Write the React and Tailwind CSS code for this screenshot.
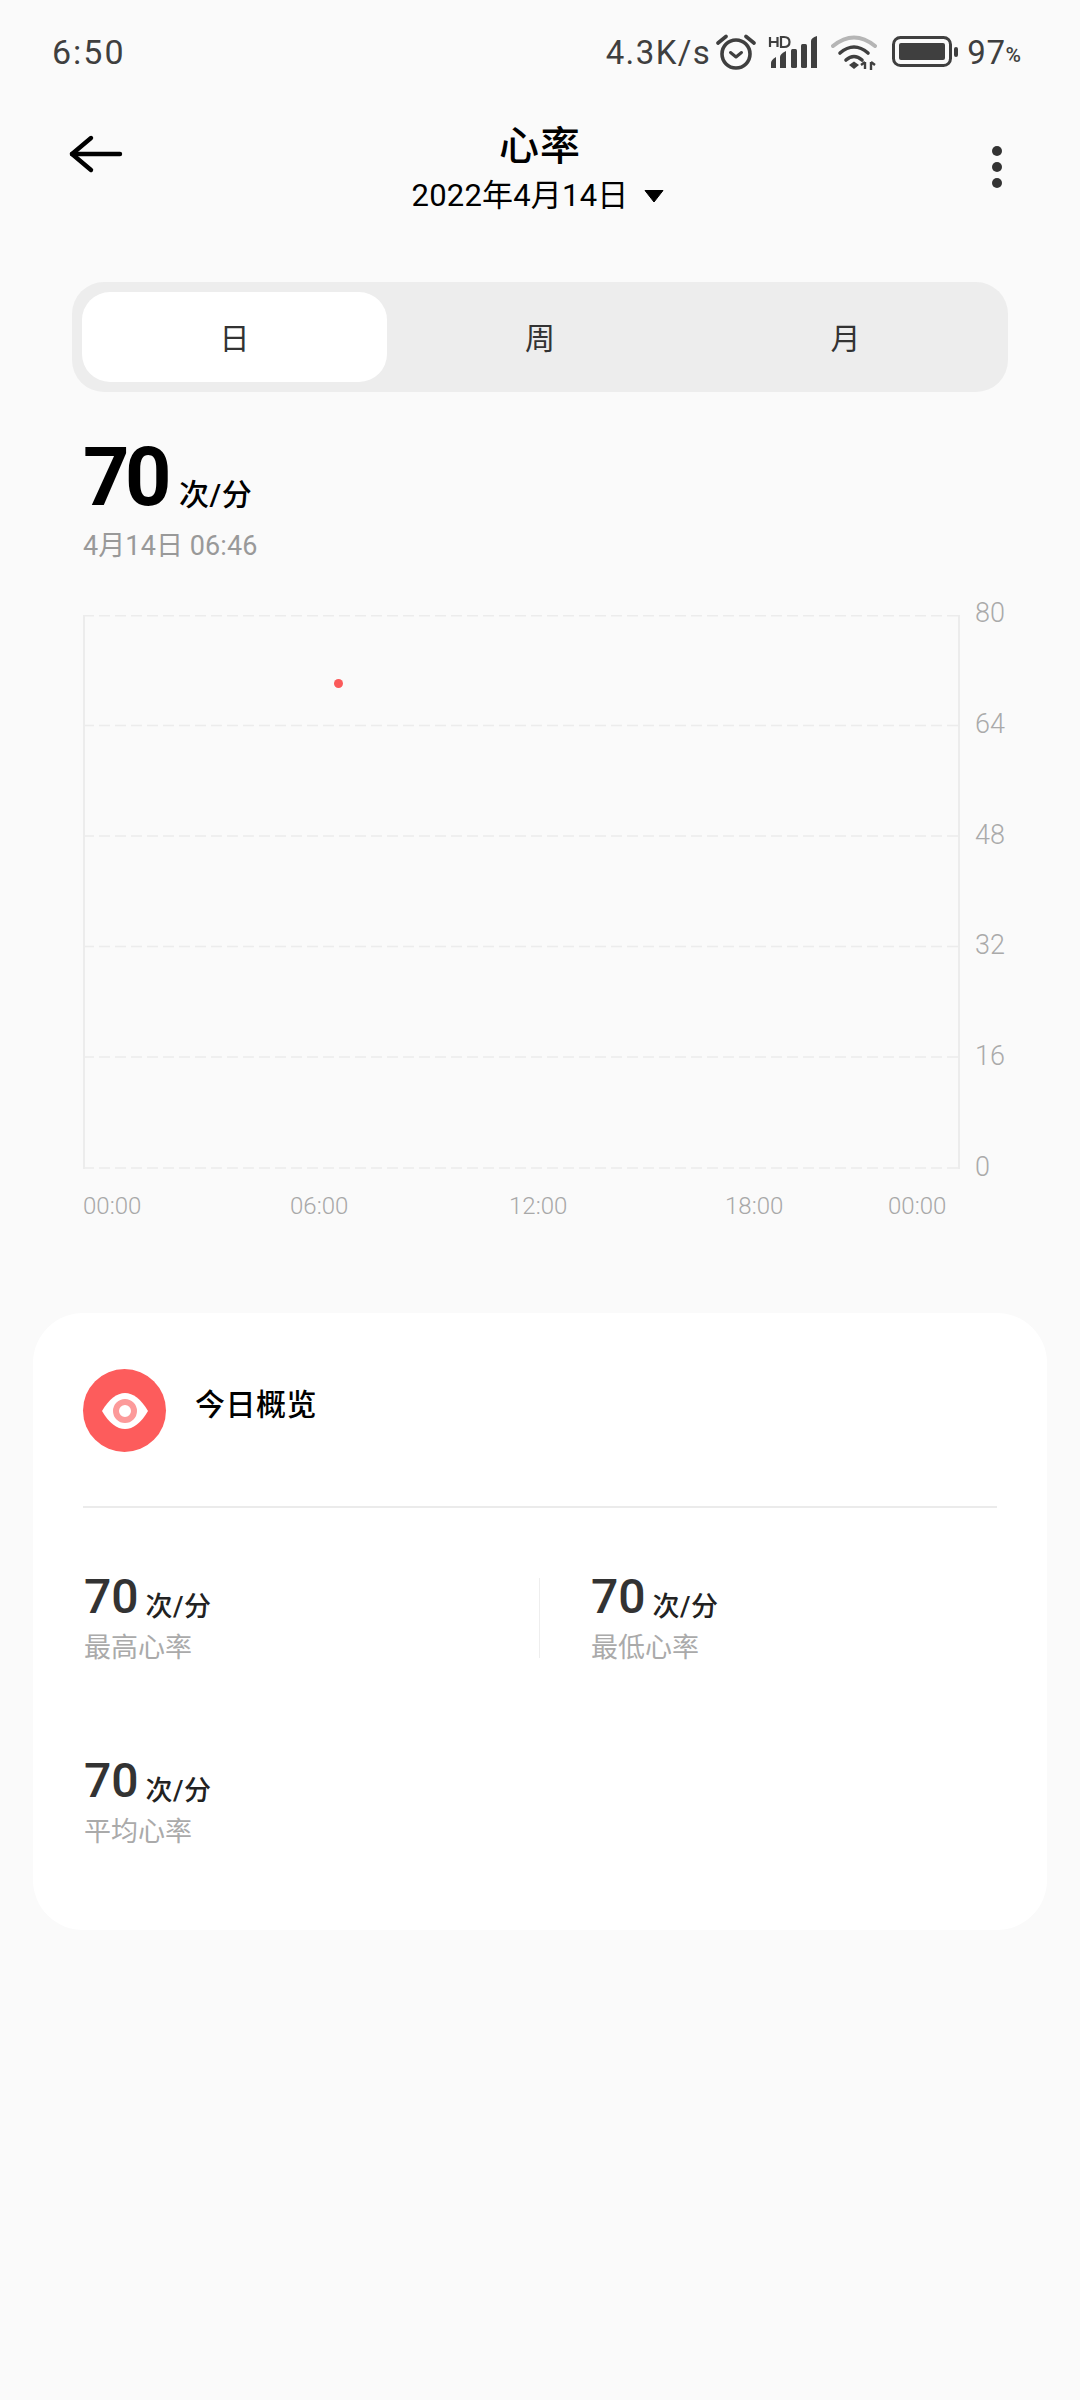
const sans = "font-['Roboto','Noto_Sans_CJK_SC',sans-serif]";

function AlarmIcon() {
  return (
    <svg width="40" height="38" viewBox="0 0 40 38" fill="none" stroke="#3f3f3f">
      <circle cx="20" cy="21" r="14" strokeWidth="3.6" />
      <path d="M14.5 19.5 L20 24 L25.5 19.5" strokeWidth="3" strokeLinecap="round" strokeLinejoin="round" />
      <path d="M2 10 L10 3.5" strokeWidth="3.6" strokeLinecap="round" />
      <path d="M38 10 L30 3.5" strokeWidth="3.6" strokeLinecap="round" />
    </svg>
  );
}

function SignalIcon() {
  return (
    <svg width="50" height="34" viewBox="0 0 50 34">
      <path d="M2 2 V12 M9.5 2 V12 M2 7 H9.5" stroke="#3f3f3f" strokeWidth="2.2" fill="none" />
      <path d="M13 2 V12 H16 Q21.5 12 21.5 7 Q21.5 2 16 2 Z" stroke="#3f3f3f" strokeWidth="2.2" fill="none" />
      <path d="M3 33 V28 Q3 25 8 22 V33 Z" fill="#3f3f3f" />
      <path d="M12 33 V22 Q12 19 18 16 V33 Z" fill="#3f3f3f" />
      <rect x="23" y="14" width="6" height="19" rx="1.5" fill="#3f3f3f" />
      <rect x="33" y="9" width="6" height="24" rx="1.5" fill="#3f3f3f" />
      <path d="M43 33 V6 Q43 3 49 1 V33 Z" fill="#3f3f3f" />
    </svg>
  );
}

function WifiIcon() {
  return (
    <svg width="46" height="36" viewBox="0 0 46 36" fill="none" strokeLinecap="round">
      <path d="M2 12 Q23 -5 44 12" stroke="#b5b5b5" strokeWidth="4" />
      <path d="M9 19 Q23 7 37 19" stroke="#3f3f3f" strokeWidth="3.6" />
      <path d="M15 26 Q23 19 31 26" stroke="#3f3f3f" strokeWidth="3.6" />
      <path d="M18 31 L23 27.5 L28 31 L23 35 Z" fill="#3f3f3f" />
      <path d="M34 28 V35 M30 31 L34 28" stroke="#3f3f3f" strokeWidth="2.4" strokeLinecap="butt" />
      <path d="M40 28 V36 M40 28 L44 31" stroke="#3f3f3f" strokeWidth="2.4" strokeLinecap="butt" />
    </svg>
  );
}

function BatteryIcon() {
  return (
    <svg width="67" height="32" viewBox="0 0 67 32">
      <rect x="1.5" y="1.5" width="57" height="28" rx="7" fill="none" stroke="#3f3f3f" strokeWidth="3" />
      <rect x="7" y="7" width="46" height="17" rx="2" fill="#3f3f3f" />
      <rect x="62" y="11" width="4" height="10" rx="2" fill="#3f3f3f" />
    </svg>
  );
}

function StatusBar() {
  return (
    <div className={`flex h-[105px] items-center justify-between pl-[52px] pr-[59px] pb-[1px] text-[#3f3f3f] ${sans}`}>
      <span className="text-[34px] leading-none tracking-[2px]">6:50</span>
      <div className="flex items-center">
        <span className="text-[33px] leading-none tracking-[1.4px]">4.3K/s</span>
        <span className="ml-[5px] flex"><AlarmIcon /></span>
        <span className="ml-[12px] flex"><SignalIcon /></span>
        <span className="ml-[13px] flex"><WifiIcon /></span>
        <span className="ml-[15px] flex"><BatteryIcon /></span>
        <span className="ml-[8px] text-[33px] leading-none tracking-[0.6px]">97</span>
        <span className="mt-[6px] text-[21px] font-medium leading-none">%</span>
      </div>
    </div>
  );
}

function Header() {
  return (
    <div className="relative flex h-[120px] flex-col items-center text-black">
      <svg className="absolute left-[68px] top-[28px]" width="56" height="42" viewBox="0 0 56 42" fill="none" stroke="#000" strokeWidth="4.4" strokeLinecap="round" strokeLinejoin="round">
        <path d="M23 5 L4 21 L23 37" />
        <path d="M4 21 H52" />
      </svg>
      <div className="mt-[20px] h-[44px] text-[40px] font-medium leading-[44px] tracking-[1px]">心率</div>
      <div className="-ml-[4px] flex h-[50px] items-center pt-[3px] text-[31px] leading-[48px] tracking-[0.2px]">
        <span>2022年4月14日</span>
        <svg className="ml-[16px]" width="20" height="14" viewBox="0 0 20 14">
          <path d="M1 1.5 H19 L10 13 Z" fill="#000" stroke="#000" strokeLinejoin="round" />
        </svg>
      </div>
      <div className="absolute left-[992px] top-[41px] flex flex-col gap-[6px]">
        <span className="size-[10px] rounded-full bg-[#333]" />
        <span className="size-[10px] rounded-full bg-[#333]" />
        <span className="size-[10px] rounded-full bg-[#333]" />
      </div>
    </div>
  );
}

function Tabs() {
  return (
    <div className="mx-[72px] mt-[57px] flex h-[110px] items-center rounded-[32px] bg-[#ededed] p-[10px] text-[30px] text-[#333]">
      <div className="flex h-[90px] w-[305px] items-center justify-center rounded-[28px] bg-white pt-[3px]">日</div>
      <div className="flex h-[90px] w-[306px] items-center justify-center pt-[3px]">周</div>
      <div className="flex h-[90px] w-[305px] items-center justify-center pt-[3px]">月</div>
    </div>
  );
}

function Reading() {
  return (
    <div className="ml-[83px] mt-[42px]">
      <div className="flex h-[80px] items-end">
        <span className="-mb-[4px] text-[81px] font-bold leading-[80px] tracking-[-4.5px] text-black">70</span>
        <span className="-mb-[1px] ml-[12px] text-[30px] font-medium leading-[40px] tracking-[0.6px] text-black">次/分</span>
      </div>
      <div className="mt-[14px] text-[27px] leading-[36px] tracking-[0.1px] text-[#999]">4月14日 06:46</div>
    </div>
  );
}

const yLabels = [80, 64, 48, 32, 16, 0];
const gridY = [0.75, 110.5, 221, 331.5, 442, 553];

function Chart() {
  return (
    <div className="ml-[83px] mt-[51px]">
      <div className="flex items-stretch">
        <div className="relative h-[554px] w-[877px]">
          <svg className="block" width="877" height="554" viewBox="0 0 877 554" fill="none">
            {gridY.map((y) => (
              <line key={y} x1="0" x2="877" y1={y} y2={y} stroke="#ececec" strokeWidth="1.5" strokeDasharray="11 5" />
            ))}
            <line x1="1" x2="1" y1="0" y2="554" stroke="#ececec" strokeWidth="2" />
            <line x1="876" x2="876" y1="0" y2="554" stroke="#ececec" strokeWidth="2" />
          </svg>
          <span className="absolute left-[251px] top-[64px] size-[9px] rounded-full bg-[#fb5a5a]" />
        </div>
        <div className="-mb-[13px] -mt-[17px] ml-[15px] flex h-[584px] flex-col justify-between text-[27px] font-light leading-[30px] text-[#aaa]">
          {yLabels.map((v) => (
            <span key={v}>{v}</span>
          ))}
        </div>
      </div>
      <div className="mt-[23px] flex text-[24px] font-light leading-[28px] text-[#a8a8a8]">
        <span className="w-[207px]">00:00</span>
        <span className="w-[219px]">06:00</span>
        <span className="w-[216px]">12:00</span>
        <span className="w-[163px]">18:00</span>
        <span>00:00</span>
      </div>
    </div>
  );
}

function EyeBadge() {
  return (
    <div className="flex size-[83px] items-center justify-center rounded-full bg-[#fd5c5c]">
      <svg width="48" height="36" viewBox="0 0 48 36">
        <path d="M1 18 C8 6 16 0 24 0 C32 0 40 6 47 18 C40 30 32 36 24 36 C16 36 8 30 1 18 Z" fill="#fff" />
        <circle cx="24" cy="18" r="9" fill="none" stroke="#fc9a9a" strokeWidth="6" />
      </svg>
    </div>
  );
}

function Stat({ label }) {
  return (
    <div className="ml-[1px]">
      <div className="flex h-[48px] items-end">
        <span className="-mt-[5px] mb-[5px] text-[48px] font-medium leading-[48px] text-[#333]">70</span>
        <span className="mb-[2px] ml-[7px] text-[27px] font-medium leading-[34px] tracking-[0.5px] text-[#222]">次/分</span>
      </div>
      <div className="mt-[4px] text-[27px] leading-[36px] text-[#aaa]">{label}</div>
    </div>
  );
}

function Overview() {
  return (
    <div className="mx-[33px] mt-[93px] h-[617px] rounded-[50px] bg-white px-[50px] pt-[56px]">
      <div className="flex h-[83px]">
        <EyeBadge />
        <div className="ml-[29px] mt-[14px] text-[30px] font-medium leading-[44px] tracking-[0.5px] text-black">今日概览</div>
      </div>
      <div className="mt-[54px] h-[2px] bg-[#ebebeb]" />
      <div className="mt-[70px] flex">
        <div className="w-[456px]"><Stat label="最高心率" /></div>
        <div className="h-[80px] w-[1px] bg-[#eee]" />
        <div className="ml-[50px]"><Stat label="最低心率" /></div>
      </div>
      <div className="mt-[96px]"><Stat label="平均心率" /></div>
    </div>
  );
}

export default function App() {
  return (
    <div className={`h-[2400px] w-[1080px] overflow-hidden bg-[#fafafa] ${sans}`}>
      <StatusBar />
      <Header />
      <Tabs />
      <Reading />
      <Chart />
      <Overview />
    </div>
  );
}
